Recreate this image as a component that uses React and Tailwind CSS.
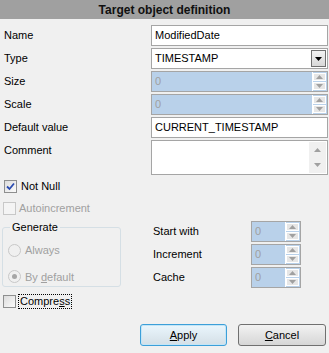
import React from "react";

const Up = ({ c = "#a0a0a0" }) => (
  <svg width="7" height="4" viewBox="0 0 7 4"><path d="M3.5 0 L7 4 L0 4 Z" fill={c} /></svg>
);
const Down = ({ c = "#a0a0a0" }) => (
  <svg width="7" height="4" viewBox="0 0 7 4"><path d="M0 0 L7 0 L3.5 4 Z" fill={c} /></svg>
);

function SpinBtns() {
  return (
    <div className="flex flex-col w-[15px] h-full border-l border-white py-[1px] pr-[1px] gap-[1px]">
      <div className="flex-1 bg-[#e6e6e6] border border-white flex items-center justify-center"><Up /></div>
      <div className="flex-1 bg-[#e6e6e6] border border-white flex items-center justify-center"><Down /></div>
    </div>
  );
}

function Spin({ className = "" }) {
  return (
    <div className={"h-[21px] border border-[#a5a5a5] bg-[#b9d1ea] flex items-stretch " + className}>
      <div className="flex-1 pl-[3px] flex items-center text-[#a0a0a0]">0</div>
      <SpinBtns />
    </div>
  );
}

function Label({ children }) {
  return <div className="w-[147px] h-[21px] flex items-center shrink-0">{children}</div>;
}

function Check({ checked, disabled }) {
  return (
    <div className={"w-[13px] h-[13px] border flex items-center justify-center shrink-0 " + (disabled ? "border-[#c8c8c8] bg-[#f4f4f4]" : "border-[#8e8f8f] bg-gradient-to-br from-[#dcdcdc] to-[#fbfbfb]")}>
      {checked && (
        <svg width="9" height="9" viewBox="0 0 9 9"><path d="M1 4.5 L3.5 7 L8 1.5" stroke="#2a4bb0" strokeWidth="1.8" fill="none" /></svg>
      )}
    </div>
  );
}

function Radio({ selected }) {
  return (
    <div className="w-[13px] h-[13px] rounded-full border border-[#c8c8c8] bg-[#f0f0f0] flex items-center justify-center shrink-0">
      {selected && <div className="w-[5px] h-[5px] rounded-full bg-[#a6a6a6]" />}
    </div>
  );
}

export default function App() {
  return (
    <div className="w-[329px] h-[353px] bg-[#f0f0f0] font-['Liberation_Sans',sans-serif] text-[11px] text-black overflow-hidden">
      <div className="h-[19px] bg-[#a0a0a0] flex items-center justify-center font-bold text-[12px] text-[#101010]">
        Target object definition
      </div>
      <div className="pl-[4px] pr-[1px] pt-[6px] flex flex-col gap-[2px]">
        <div className="flex">
          <Label>Name</Label>
          <div className="flex-1 h-[21px] border border-[#a5a5a5] bg-white pl-[3px] flex items-center">ModifiedDate</div>
        </div>
        <div className="flex">
          <Label>Type</Label>
          <div className="flex-1 h-[21px] border border-[#a5a5a5] bg-white pl-[3px] flex items-center justify-between">
            <span>TIMESTAMP</span>
            <div className="w-[15px] h-[17px] mr-[1px] border border-[#707070] bg-gradient-to-b from-[#f2f2f2] to-[#d8d8d8] flex items-center justify-center">
              <Down c="#000" />
            </div>
          </div>
        </div>
        <div className="flex">
          <Label>Size</Label>
          <Spin className="flex-1" />
        </div>
        <div className="flex">
          <Label>Scale</Label>
          <Spin className="flex-1" />
        </div>
        <div className="flex">
          <Label>Default value</Label>
          <div className="flex-1 h-[21px] border border-[#a5a5a5] bg-white pl-[3px] flex items-center">CURRENT_TIMESTAMP</div>
        </div>
        <div className="flex">
          <Label>Comment</Label>
          <div className="flex-1 h-[35px] border border-[#a5a5a5] bg-white flex justify-end">
            <div className="w-[17px] my-[1px] mr-[1px] bg-[#f0f0f0] flex flex-col items-center justify-between py-[6px]">
              <Up /><Down />
            </div>
          </div>
        </div>
      </div>
      <div className="pl-[4px] mt-[4px] h-[14px] flex items-center gap-[4px]">
        <Check checked />
        <span>Not Null</span>
      </div>
      <div className="pl-[3px] mt-[8px] h-[14px] flex items-center gap-[3px] text-[#a0a0a0]">
        <Check disabled />
        <span>Autoincrement</span>
      </div>
      <div className="flex mt-[6px]">
        <fieldset className="ml-[2px] w-[119px] h-[66px] border border-[#d5dfe5] rounded-[3px] flex flex-col">
          <legend className="ml-[7px] px-[2px] leading-[13px]">Generate</legend>
          <div className="pl-[5px] mt-[8px] flex items-center gap-[4px] text-[#a0a0a0]">
            <Radio />
            <span>Always</span>
          </div>
          <div className="pl-[5px] mt-[10px] flex items-center gap-[4px] text-[#a0a0a0]">
            <Radio selected />
            <span>By <span className="underline">d</span>efault</span>
          </div>
        </fieldset>
        <div className="ml-[32px] flex flex-col gap-[2px]">
          <div className="flex"><div className="w-[98px] flex items-center">Start with</div><Spin className="w-[50px]" /></div>
          <div className="flex"><div className="w-[98px] flex items-center">Increment</div><Spin className="w-[50px]" /></div>
          <div className="flex"><div className="w-[98px] flex items-center">Cache</div><Spin className="w-[50px]" /></div>
        </div>
      </div>
      <div className="pl-[3px] mt-[5px] h-[16px] flex items-center gap-[2px]">
        <Check />
        <span className="border border-dotted border-black px-[1px] leading-[13px]">Compre<span className="underline">s</span>s</span>
      </div>
      <div className="flex justify-end gap-[11px] pr-[3px] mt-[15px]">
        <button className="w-[87px] h-[22px] rounded-[3px] border border-[#3c9fd9] bg-gradient-to-b from-[#eaf6fd] to-[#d4dfe6] shadow-[inset_0_0_0_1px_#c4e5f6] flex items-center justify-center">
          <span><span className="underline">A</span>pply</span>
        </button>
        <button className="w-[88px] h-[22px] rounded-[3px] border border-[#707070] bg-gradient-to-b from-[#f2f2f2] to-[#d6d6d6] flex items-center justify-center">
          <span><span className="underline">C</span>ancel</span>
        </button>
      </div>
    </div>
  );
}
